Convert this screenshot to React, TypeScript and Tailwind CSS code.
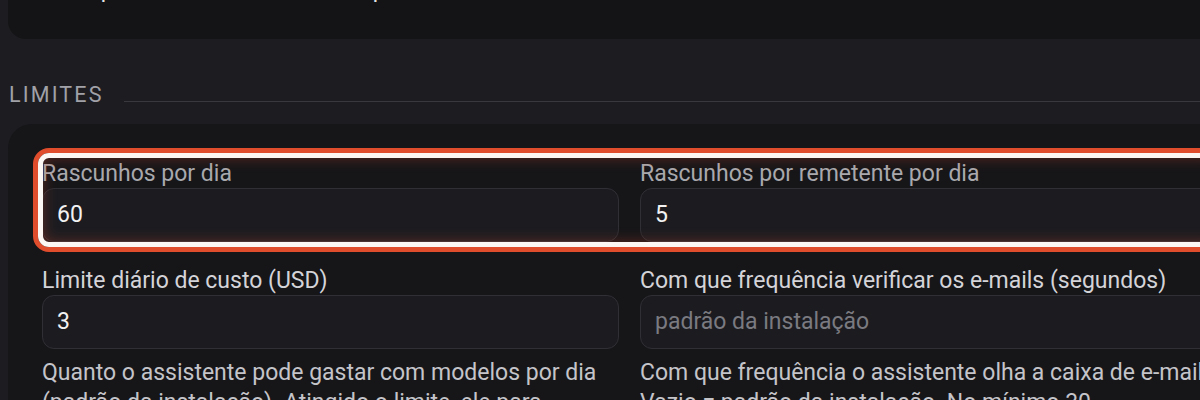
import React from "react";

function Field({
  label,
  value,
  placeholder,
  help,
  dim,
}: {
  label: string;
  value?: string;
  placeholder?: string;
  help?: string[];
  dim?: boolean;
}) {
  return (
    <div className="flex flex-col">
      <label
        className={
          "text-[23px] leading-[27px] mb-px whitespace-nowrap " +
          (dim ? "text-[#a9a9ad]" : "text-[#d4d4d8]")
        }
      >
        {label}
      </label>
      <div className="h-[54px] rounded-[12px] border border-[#2f2f35] bg-[#1c1c20] px-[14px] flex items-center text-[23px]">
        {value ? (
          <span className="text-[#f2f2f3]">{value}</span>
        ) : (
          <span className="text-[#7a7a81]">{placeholder}</span>
        )}
      </div>
      {help && (
        <div className="mt-[9px] text-[23px] leading-[30px] text-[#c4c4c9] whitespace-nowrap">
          {help.map((h, i) => (
            <div key={i}>{h}</div>
          ))}
        </div>
      )}
    </div>
  );
}

export default function App() {
  return (
    <div className="w-[1200px] h-[400px] overflow-hidden bg-[#1d1d21] font-['Roboto',sans-serif]">
      <div className="ml-[8px] w-[1240px] h-[39px] rounded-b-[18px] bg-[#141416] overflow-hidden">
        <p className="-mt-[24px] pl-[34px] text-[23px] leading-[27px] text-[#e4e4e7] whitespace-nowrap">
          Cada pedido feito ao modelo de processamento conta no total
        </p>
      </div>

      <div className="mt-[44px] pl-[9px] flex items-end">
        <span className="text-[21.5px] leading-[24px] tracking-[0.1em] text-[#a1a1a8]">
          LIMITES
        </span>
        <div className="flex-1 h-px bg-[#38383e] ml-[20px] mb-[5px]" />
      </div>

      <div className="ml-[8px] mt-[17px] w-[1240px] h-[300px] rounded-tl-[24px] bg-[#161619] pl-[34px] pt-[36px]">
        <div className="w-[1175px] flex flex-col gap-[25px]">
          <div className="relative grid grid-cols-2 gap-[21px]">
            <Field label="Rascunhos por dia" value="60" dim />
            <Field label="Rascunhos por remetente por dia" value="5" dim />
            <div className="pointer-events-none absolute -left-[9px] -top-[12px] -bottom-[10px] -right-[9px] rounded-[16px] border-[5px] border-[#df4d2d]">
              <div className="h-full w-full rounded-[11px] border-[5px] border-[#fdf7f4] shadow-[inset_0_0_14px_rgba(223,77,45,0.35)]" />
            </div>
          </div>
          <div className="grid grid-cols-2 gap-[21px]">
            <Field
              label="Limite diário de custo (USD)"
              value="3"
              help={[
                "Quanto o assistente pode gastar com modelos por dia",
                "(padrão da instalação). Atingido o limite, ele para.",
              ]}
            />
            <Field
              label="Com que frequência verificar os e-mails (segundos)"
              placeholder="padrão da instalação"
              help={[
                "Com que frequência o assistente olha a caixa de e-mail.",
                "Vazio = padrão da instalação. No mínimo 30.",
              ]}
            />
          </div>
        </div>
      </div>
    </div>
  );
}
